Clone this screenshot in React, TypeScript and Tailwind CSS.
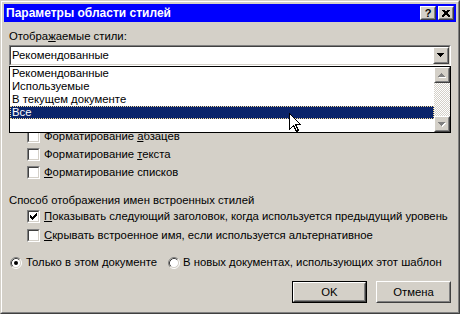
function Sunken({ className = '', children }: { className?: string; children?: React.ReactNode }) {
  return (
    <div className={`border border-t-[#808080] border-l-[#808080] border-b-white border-r-white ${className}`}>
      <div className="h-full border border-t-[#404040] border-l-[#404040] border-b-[#d4d0c8] border-r-[#d4d0c8] bg-white">
        {children}
      </div>
    </div>
  );
}

function Raised({ className = '', children }: { className?: string; children?: React.ReactNode }) {
  return (
    <div className={`border border-t-white border-l-white border-b-[#404040] border-r-[#404040] bg-[#d4d0c8] ${className}`}>
      <div className="h-full border border-t-[#d4d0c8] border-l-[#d4d0c8] border-b-[#808080] border-r-[#808080] flex items-center justify-center">
        {children}
      </div>
    </div>
  );
}

function Arrow({ up = false, disabled = false }: { up?: boolean; disabled?: boolean }) {
  const d = up ? 'M3.5 0 L7 4 L0 4 Z' : 'M0 0 L7 0 L3.5 4 Z';
  return (
    <svg width="8" height="5" viewBox="0 0 8 5" shapeRendering="crispEdges">
      {disabled && <path d={d} transform="translate(1 1)" fill="#fff" />}
      <path d={d} fill={disabled ? '#808080' : '#000'} />
    </svg>
  );
}

function Checkbox({ checked = false }: { checked?: boolean }) {
  return (
    <Sunken className="w-[13px] h-[13px] flex-none">
      {checked && (
        <svg width="9" height="9" viewBox="0 0 9 9" shapeRendering="crispEdges">
          <polyline points="1.5,3.5 3.5,5.5 7.5,1.5" fill="none" stroke="#000" />
          <polyline points="1.5,4.5 3.5,6.5 7.5,2.5" fill="none" stroke="#000" />
          <polyline points="1.5,5.5 3.5,7.5 7.5,3.5" fill="none" stroke="#000" />
        </svg>
      )}
    </Sunken>
  );
}

function Radio({ checked = false }: { checked?: boolean }) {
  return (
    <svg width="12" height="12" viewBox="0 0 12 12" className="flex-none">
      <circle cx="6" cy="6" r="4.5" fill="#fff" />
      <path d="M2.11 9.89 A5.5 5.5 0 0 1 9.89 2.11" fill="none" stroke="#808080" />
      <path d="M9.89 2.11 A5.5 5.5 0 0 1 2.11 9.89" fill="none" stroke="#fff" />
      <path d="M2.82 9.18 A4.5 4.5 0 0 1 9.18 2.82" fill="none" stroke="#404040" />
      <path d="M9.18 2.82 A4.5 4.5 0 0 1 2.82 9.18" fill="none" stroke="#d4d0c8" />
      {checked && <circle cx="6" cy="6" r="2" fill="#000" />}
    </svg>
  );
}

function CheckRow({ checked = false, children }: { checked?: boolean; children: React.ReactNode }) {
  return (
    <div className="flex items-center gap-[4px] pl-[18px] h-[13px]">
      <Checkbox checked={checked} />
      <span className="whitespace-nowrap">{children}</span>
    </div>
  );
}

const options = ['Рекомендованные', 'Используемые', 'В текущем документе', 'Все'];

export default function App() {
  return (
    <div className="relative w-[460px] h-[314px] bg-[#d4d0c8] border border-t-[#d4d0c8] border-l-[#d4d0c8] border-r-[#404040] border-b-[#404040] font-['Liberation_Sans',Arial,sans-serif] text-[11.3px] leading-[13px] text-black overflow-hidden">
      <div className="h-full border border-t-white border-l-white border-r-[#808080] border-b-[#808080] p-[2px] flex flex-col">
        {/* title bar */}
        <div className="h-[18px] flex-none bg-[#0000ff] flex items-center pl-[2px] pr-[2px]">
          <span className="flex-1 text-white font-bold text-[12px] whitespace-nowrap">Параметры области стилей</span>
          <div className="flex gap-[2px]">
            <Raised className="w-[16px] h-[14px]">
              <span className="font-bold text-[11px] leading-none">?</span>
            </Raised>
            <Raised className="w-[16px] h-[14px]">
              <svg width="8" height="7" viewBox="0 0 8 7" shapeRendering="crispEdges">
                <path d="M0.5 0 L7.5 7 M1.5 0 L8.5 7 M7.5 0 L0.5 7 M6.5 0 L-0.5 7" stroke="#000" />
              </svg>
            </Raised>
          </div>
        </div>

        <div className="relative flex-1 px-[5px] flex flex-col">
          <div className="mt-[8px]">
            Отобра<span className="underline">ж</span>аемые стили:
          </div>
          <Sunken className="mt-[2px] h-[21px]">
            <div className="flex h-full">
              <div className="flex-1 pl-[1px] flex items-center">Рекомендованные</div>
              <Raised className="w-[16px] h-[17px]">
                <Arrow />
              </Raised>
            </div>
          </Sunken>

          {/* area hidden by the open list */}
          <div className="h-[64px] flex-none" />

          <div className="flex flex-col gap-[5px]">
            <CheckRow>
              Форматирование <span className="underline">а</span>бзацев
            </CheckRow>
            <CheckRow>
              Форматирование <span className="underline">т</span>екста
            </CheckRow>
            <CheckRow>
              <span className="underline">Ф</span>орматирование списков
            </CheckRow>
          </div>

          <div className="mt-[15px]">Способ отображения имен встроенных стилей</div>
          <div className="mt-[3px]">
            <CheckRow checked>
              <span className="underline">П</span>оказывать следующий заголовок, когда используется предыдущий уровень
            </CheckRow>
          </div>
          <div className="mt-[6px]">
            <CheckRow>
              <span className="underline">С</span>крывать встроенное имя, если используется альтернативное
            </CheckRow>
          </div>

          <div className="mt-[14px] flex items-center h-[13px] pl-[1px]">
            <div className="w-[158px] flex items-center gap-[4px]">
              <Radio checked />
              <span className="whitespace-nowrap">Только в этом документе</span>
            </div>
            <div className="flex items-center gap-[3px]">
              <Radio />
              <span className="whitespace-nowrap">В новых документах, использующих этот шаблон</span>
            </div>
          </div>

          <div className="mt-[12px] flex justify-end gap-[9px]">
            <div className="w-[75px] h-[22px] border border-black">
              <Raised className="h-full">OK</Raised>
            </div>
            <Raised className="w-[75px] h-[22px]">Отмена</Raised>
          </div>

          {/* open dropdown list */}
          <div className="absolute left-[5px] top-[44px] w-[442px] h-[67px] border border-black bg-white flex z-10">
            <div className="flex-1 flex flex-col">
              {options.map((o) => (
                <div
                  key={o}
                  className={
                    o === 'Все'
                      ? 'h-[13px] bg-[#0a246a] text-white border border-dotted border-[#f5db95] pl-[1px] leading-[11px]'
                      : 'h-[13px] pl-[2px]'
                  }
                >
                  {o}
                </div>
              ))}
            </div>
            <div className="w-[16px] flex flex-col">
              <Raised className="h-[16px]">
                <Arrow up disabled />
              </Raised>
              <div className="flex-1 bg-[repeating-conic-gradient(#ffffff_0_25%,#d4d0c8_0_50%)] bg-[length:2px_2px]" />
              <Raised className="h-[16px]">
                <Arrow disabled />
              </Raised>
            </div>
          </div>
        </div>
      </div>

      {/* mouse pointer */}
      <svg
        className="absolute left-[288px] top-[112px] z-20"
        width="13"
        height="20"
        viewBox="0 0 13 20"
        shapeRendering="crispEdges"
      >
        <path d="M0.5 0.5 V16.5 L4.5 12.5 L7.5 18.5 L9.5 17.5 L6.5 11.5 H11.5 Z" fill="#fff" stroke="#000" />
      </svg>
    </div>
  );
}
